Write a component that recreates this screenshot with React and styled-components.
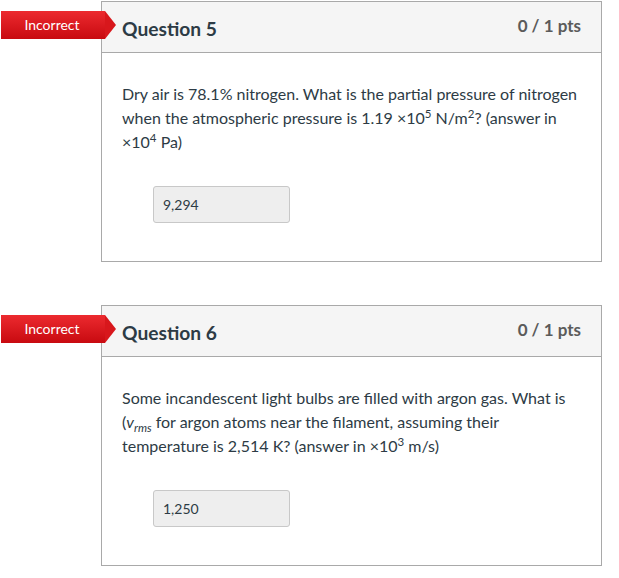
import React from "react";
import styled, { createGlobalStyle } from "styled-components";

const GlobalStyle = createGlobalStyle`
  body {
    margin: 0;
    background: #fff;
    font-family: Lato, "Open Sans", sans-serif;
    color: #2d3b45;
  }
`;

const questions = [
  {
    number: 5,
    answer: "9,294",
    text: (
      <>
        Dry air is 78.1% nitrogen. What is the partial pressure of nitrogen
        when the atmospheric pressure is 1.19 ×10<sup>5</sup> N/m<sup>2</sup>?
        (answer in ×10<sup>4</sup> Pa)
      </>
    ),
  },
  {
    number: 6,
    answer: "1,250",
    text: (
      <>
        Some incandescent light bulbs are filled with argon gas. What is (
        <i>v</i>
        <sub>
          <i>rms</i>
        </sub>{" "}
        for argon atoms near the filament, assuming their temperature is
        2,514 K? (answer in ×10<sup>3</sup> m/s)
      </>
    ),
  },
];

export default function App() {
  return (
    <>
      <GlobalStyle />
      <Page>
        {questions.map((q) => (
          <Question key={q.number}>
            <Badge>Incorrect</Badge>
            <Header>
              <Title>Question {q.number}</Title>
              <Points>0 / 1 pts</Points>
            </Header>
            <Body>
              <Text>{q.text}</Text>
              <Answer>{q.answer}</Answer>
            </Body>
          </Question>
        ))}
      </Page>
    </>
  );
}

const Page = styled.div`
  display: flex;
  flex-direction: column;
  gap: 43px;
  padding: 1px 17px 0 101px;
`;

const Question = styled.div`
  position: relative;
  width: 501px;
  box-sizing: border-box;
  border: 1px solid #a9a9a9;
`;

const Badge = styled.div`
  position: absolute;
  top: 9px;
  left: -101px;
  width: 104px;
  height: 28px;
  padding: 0 2px 2px 0;
  box-sizing: border-box;
  display: flex;
  align-items: center;
  justify-content: center;
  color: #fff;
  font-size: 14px;
  background: linear-gradient(#ec2a2f, #c80a10);
  &::after {
    content: "";
    position: absolute;
    right: -11px;
    top: 0;
    border-style: solid;
    border-width: 14px 0 14px 11px;
    border-color: transparent transparent transparent #d8171c;
  }
`;

const Header = styled.div`
  height: 50px;
  display: flex;
  align-items: center;
  justify-content: space-between;
  padding: 0 20px;
  background: #f5f5f5;
  border-bottom: 1px solid #a9a9a9;
`;

const Title = styled.h2`
  margin: 3px 0 0;
  font-size: 19.2px;
  font-weight: 700;
  color: #2d3b45;
`;

const Points = styled.div`
  margin-top: -4px;
  font-size: 17px;
  font-weight: 700;
  color: #5b5b5b;
`;

const Body = styled.div`
  padding: 29px 20px 38px;
`;

const Text = styled.p`
  margin: 0;
  font-size: 16px;
  line-height: 24px;
  color: #2d3b45;
  sup,
  sub {
    font-size: 0.72em;
    line-height: 0;
  }
`;

const Answer = styled.div`
  margin: 32px 0 0 31px;
  width: 137px;
  height: 37px;
  box-sizing: border-box;
  display: flex;
  align-items: center;
  padding-left: 9px;
  font-size: 14px;
  color: #2d3b45;
  background: #eeeeee;
  border: 1px solid #c8c8c8;
  border-radius: 3px;
`;
